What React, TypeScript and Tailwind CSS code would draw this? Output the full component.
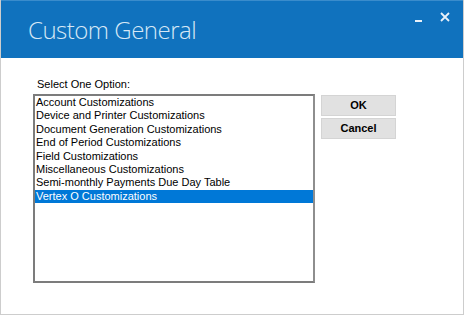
const OPTIONS = [
  "Account Customizations",
  "Device and Printer Customizations",
  "Document Generation Customizations",
  "End of Period Customizations",
  "Field Customizations",
  "Miscellaneous Customizations",
  "Semi-monthly Payments Due Day Table",
  "Vertex O Customizations",
];

export default function App() {
  const selected = 7;

  return (
    <div className="w-[464px] h-[315px] flex flex-col bg-white border-x border-b border-[#cdcdcd] font-['Liberation_Sans',Arial,sans-serif]">
      {/* Title bar */}
      <div className="h-[58px] shrink-0 bg-[#1072be] border-t border-[#3a8ccc] flex items-start justify-between">
        <div className="pl-[27px] pt-[14px] text-[24px] leading-[30px] font-light text-[#d6e8f6] font-['Open_Sans',sans-serif] tracking-[-0.5px]">
          Custom General
        </div>
        <div className="flex items-start gap-[17px] pr-[13px] pt-[9px]">
          <svg width="8" height="14" viewBox="0 0 8 14">
            <rect x="0" y="10" width="7" height="2" fill="#e8f1f9" />
          </svg>
          <svg width="10" height="14" viewBox="0 0 10 14">
            <path d="M1 3 L9 11 M9 3 L1 11" stroke="#e8f1f9" strokeWidth="1.8" />
          </svg>
        </div>
      </div>

      {/* Body */}
      <div className="flex pl-[32px] pt-[20px] text-[11px] text-black">
        <div className="flex flex-col">
          <div className="pl-[4px] h-[16px] leading-[13px]">Select One Option:</div>
          <div className="w-[282px] h-[189px] border-2 border-t-[#7c7c7c] border-l-[#7c7c7c] border-r-[#8e8e8e] border-b-[#7c7c7c] flex flex-col">
            {OPTIONS.map((o, i) => (
              <div
                key={o}
                className={
                  i === selected
                    ? "h-[13.4px] leading-[13px] pl-[1px] bg-[#0078d7] text-white"
                    : "h-[13.4px] leading-[13px] pl-[1px]"
                }
              >
                {o}
              </div>
            ))}
          </div>
        </div>

        <div className="flex flex-col gap-[2px] pl-[6px] pt-[17px]">
          <button className="w-[75px] h-[21px] bg-[#e1e1e1] border border-[#d4d4d4] font-bold text-[11px] leading-[19px]">
            OK
          </button>
          <button className="w-[75px] h-[21px] bg-[#e1e1e1] border border-[#d4d4d4] font-bold text-[11px] leading-[19px]">
            Cancel
          </button>
        </div>
      </div>
    </div>
  );
}
